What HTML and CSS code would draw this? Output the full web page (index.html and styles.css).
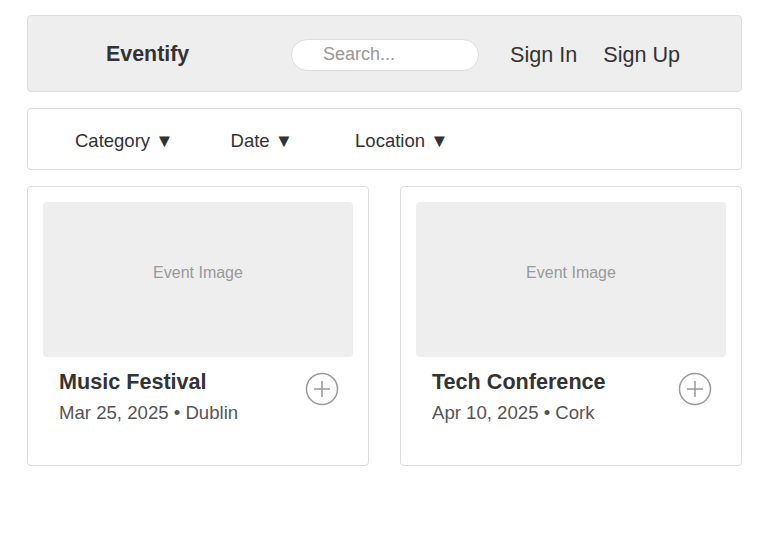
FILE: index.html
```html
<!DOCTYPE html>
<html>
<head>
<meta charset="utf-8">
<link rel="stylesheet" href="styles.css">
</head>
<body>
<div class="page">
  <header class="topbar">
    <div class="logo">Eventify</div>
    <input class="search" type="text" placeholder="Search...">
    <nav class="auth">
      <span class="auth-link">Sign In</span>
      <span class="auth-link">Sign Up</span>
    </nav>
  </header>
  <div class="filters">
    <span class="filter f-cat">Category ▼</span>
    <span class="filter f-date">Date ▼</span>
    <span class="filter f-loc">Location ▼</span>
  </div>
  <div class="cards">
    <div class="card">
      <div class="thumb">Event Image</div>
      <div class="info">
        <div class="text">
          <div class="title">Music Festival</div>
          <div class="meta">Mar 25, 2025 • Dublin</div>
        </div>
        <svg class="add" width="34" height="34" viewBox="0 0 34 34"><circle cx="17" cy="17" r="15.5" fill="none" stroke="#999" stroke-width="1.5"/><path d="M17 9V25M9 17H25" stroke="#999" stroke-width="1.5"/></svg>
      </div>
    </div>
    <div class="card">
      <div class="thumb">Event Image</div>
      <div class="info">
        <div class="text">
          <div class="title">Tech Conference</div>
          <div class="meta">Apr 10, 2025 • Cork</div>
        </div>
        <svg class="add" width="34" height="34" viewBox="0 0 34 34"><circle cx="17" cy="17" r="15.5" fill="none" stroke="#999" stroke-width="1.5"/><path d="M17 9V25M9 17H25" stroke="#999" stroke-width="1.5"/></svg>
      </div>
    </div>
  </div>
</div>
</body>
</html>
```
FILE: styles.css
```css
* { box-sizing: border-box; }
body {
  margin: 0;
  font-family: "Liberation Sans", Arial, sans-serif;
  color: #333;
  background: #fff;
}
.page {
  padding: 15px 25px 0 27px;
  display: flex;
  flex-direction: column;
  gap: 16px;
}
.topbar {
  height: 77px;
  background: #eee;
  border: 1px solid #ddd;
  border-radius: 4px;
  display: flex;
  align-items: center;
  padding-left: 78px;
  padding-top: 2px;
}
.logo {
  font-weight: bold;
  font-size: 21.4px;
  width: 185px;
}
.search {
  width: 188px;
  height: 32px;
  border: 1px solid #ddd;
  border-radius: 16px;
  background: #fff;
  padding: 0 0 0 31px;
  font-family: "Liberation Sans", Arial, sans-serif;
  font-size: 18px;
  color: #333;
  outline: none;
}
.search::placeholder { color: #999; }
.auth {
  display: flex;
  gap: 26px;
  margin-left: 31px;
}
.auth-link {
  font-size: 21.6px;
}
.filters {
  height: 62px;
  border: 1px solid #ddd;
  border-radius: 4px;
  display: flex;
  align-items: center;
  padding-left: 47px;
  padding-top: 3px;
  font-size: 18.5px;
}
.f-date { margin-left: 57px; }
.f-loc { margin-left: 62px; }
.cards {
  display: flex;
  gap: 31px;
}
.card {
  width: 342px;
  height: 280px;
  border: 1px solid #ddd;
  border-radius: 4px;
  padding: 15px;
}
.thumb {
  height: 155px;
  background: #eee;
  border-radius: 4px;
  display: flex;
  align-items: center;
  justify-content: center;
  padding-bottom: 13px;
  color: #999;
  font-size: 16px;
}
.info {
  display: flex;
  justify-content: space-between;
  align-items: flex-start;
  padding: 12px 14px 0 16px;
}
.title {
  font-weight: bold;
  font-size: 21.6px;
  line-height: 26px;
}
.meta {
  font-size: 18.6px;
  color: #555;
  margin-top: 7px;
  line-height: 22px;
}
.add {
  margin-top: 3px;
}
```
